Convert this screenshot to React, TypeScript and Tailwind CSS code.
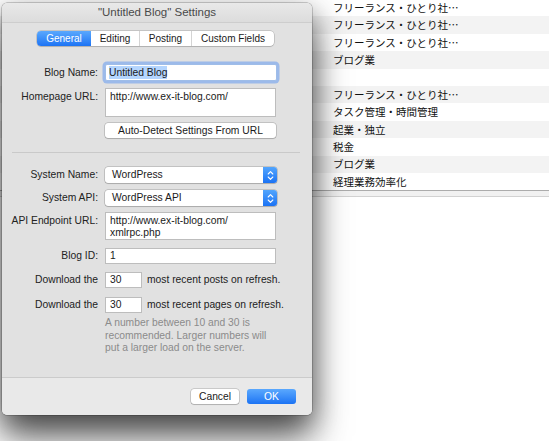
import React from "react";

const rows = [
  "フリーランス・ひとり社…",
  "フリーランス・ひとり社…",
  "フリーランス・ひとり社…",
  "ブログ業",
  "",
  "フリーランス・ひとり社…",
  "タスク管理・時間管理",
  "起業・独立",
  "税金",
  "ブログ業",
  "経理業務効率化",
];

const tabs = ["General", "Editing", "Posting", "Custom Fields"];
const tabWidths = ["w-[54px]", "w-[48px]", "w-[52px]", "w-[83px]"];

function Stepper() {
  return (
    <div className="flex h-full w-[14px] items-center justify-center rounded-r-[3px] bg-gradient-to-b from-[#52a5fd] to-[#1a72f4]">
      <svg width="7" height="11" viewBox="0 0 7 11" fill="none" stroke="white" strokeWidth="1.1" strokeLinecap="round" strokeLinejoin="round">
        <path d="M1.2 4 L3.5 1.7 L5.8 4" />
        <path d="M1.2 7 L3.5 9.3 L5.8 7" />
      </svg>
    </div>
  );
}

function Popup({ value }: { value: string }) {
  return (
    <div className="flex h-[16px] w-[172px] rounded-[3px] bg-white shadow-[0_0_0_0.5px_rgba(0,0,0,0.28),0_1px_1px_rgba(0,0,0,0.12)]">
      <div className="flex-1 pl-[7px] leading-[16px] text-[#1a1a1a]">{value}</div>
      <Stepper />
    </div>
  );
}

function Label({ children, multi }: { children: React.ReactNode; multi?: boolean }) {
  return (
    <div className={`w-[96px] shrink-0 text-right text-[#222] ${multi ? "pt-[3px] leading-[12px]" : ""}`}>
      {children}
    </div>
  );
}

export default function App() {
  return (
    <div className="relative h-[441px] w-[549px] overflow-hidden bg-white font-['Liberation_Sans',Arial,sans-serif]">
      {/* list behind the window */}
      <div className="mt-[-1px] font-['Noto_Sans_CJK_JP',sans-serif] text-[10.5px] text-[#111]">
        {rows.map((r, i) => (
          <div
            key={i}
            className={`flex h-[17.4px] items-center pl-[333px] ${i % 2 === 1 ? "bg-[#f3f3f3]" : "bg-white"}`}
          >
            {r}
          </div>
        ))}
        <div className="h-[7px] border-t border-b border-t-[#acacac] border-b-[#d2d2d2] bg-[#f1f1f1]" />
      </div>

      {/* settings window */}
      <div className="absolute left-[2px] top-[3px] flex h-[412px] w-[310px] flex-col overflow-hidden rounded-[5px] bg-[#e1e1e1] text-[10.3px] shadow-[0_0_0_0.5px_rgba(0,0,0,0.35),0_22px_36px_rgba(0,0,0,0.62),0_8px_26px_rgba(0,0,0,0.3)]">
        <div className="flex h-[20px] shrink-0 items-center justify-center border-b border-[#cdcdcd] bg-gradient-to-b from-[#e9e9e9] to-[#dcdcdc] text-[11.5px] text-[#4a4a4a]">
          "Untitled Blog" Settings
        </div>

        <div className="flex flex-1 flex-col">
          {/* tabs */}
          <div className="mt-[8px] flex justify-center pr-[3px]">
            <div className="flex h-[15px] rounded-[4px] bg-white shadow-[0_0_0_0.5px_rgba(0,0,0,0.25),0_1px_1px_rgba(0,0,0,0.1)]">
              {tabs.map((t, i) => (
                <div
                  key={t}
                  className={`${tabWidths[i]} flex items-center justify-center text-[10px] ${
                    i === 0
                      ? "rounded-l-[4px] bg-gradient-to-b from-[#5aa8fd] to-[#1b73f4] text-white"
                      : "border-l border-[#d4d4d4] text-[#1a1a1a]"
                  } ${i === 1 ? "border-l-0" : ""}`}
                >
                  {t}
                </div>
              ))}
            </div>
          </div>

          {/* Blog Name */}
          <div className="mt-[18px] flex items-center gap-[7px]">
            <Label>Blog Name:</Label>
            <div className="flex h-[17px] w-[172px] items-center rounded-[2px] border border-[#9fbde8] bg-white px-[3px] shadow-[0_0_0_2.5px_rgba(110,160,240,0.6)]">
              <span className="bg-[#b4d5fe] leading-[13px] text-[#1a1a1a]">Untitled Blog</span>
            </div>
          </div>

          {/* Homepage URL */}
          <div className="mt-[7px] flex items-start gap-[7px]">
            <Label multi>Homepage URL:</Label>
            <div className="h-[29px] w-[171px] border border-[#bdbdbd] bg-white px-[4px] pt-[2px] leading-[12px] text-[#1a1a1a]">
              http://www.ex-it-blog.com/
            </div>
          </div>

          {/* Auto detect */}
          <div className="mt-[6px] flex pl-[103px]">
            <div className="flex h-[15px] w-[171px] items-center justify-center rounded-[3px] bg-white text-[#1a1a1a] shadow-[0_0_0_0.5px_rgba(0,0,0,0.28),0_1px_1px_rgba(0,0,0,0.12)]">
              Auto-Detect Settings From URL
            </div>
          </div>

          <div className="ml-[10px] mr-[12px] mt-[14px] h-px bg-[#c9c9c9]" />

          <div className="mt-[14px] flex items-center gap-[7px]">
            <Label>System Name:</Label>
            <Popup value="WordPress" />
          </div>

          <div className="mt-[7px] flex items-center gap-[7px]">
            <Label>System API:</Label>
            <Popup value="WordPress API" />
          </div>

          <div className="mt-[6px] flex items-start gap-[7px]">
            <Label multi>API Endpoint URL:</Label>
            <div className="h-[28px] w-[171px] border border-[#bdbdbd] bg-white px-[4px] pt-[2px] leading-[12px] text-[#1a1a1a]">
              http://www.ex-it-blog.com/
              <br />
              xmlrpc.php
            </div>
          </div>

          <div className="mt-[8px] flex items-center gap-[7px]">
            <Label>Blog ID:</Label>
            <div className="flex h-[16px] w-[171px] items-center border border-[#bdbdbd] bg-white px-[4px] text-[#1a1a1a]">
              1
            </div>
          </div>

          <div className="mt-[8px] flex items-center gap-[7px]">
            <Label>Download the</Label>
            <div className="flex h-[16px] w-[37px] items-center border border-[#bdbdbd] bg-white px-[4px] text-[#1a1a1a]">
              30
            </div>
            <div className="ml-[-2px] text-[#222]">most recent posts on refresh.</div>
          </div>

          <div className="mt-[9px] flex items-center gap-[7px]">
            <Label>Download the</Label>
            <div className="flex h-[16px] w-[37px] items-center border border-[#bdbdbd] bg-white px-[4px] text-[#1a1a1a]">
              30
            </div>
            <div className="ml-[-2px] text-[#222]">most recent pages on refresh.</div>
          </div>

          <div className="mt-[4px] pl-[103px] leading-[12.5px] text-[#8b8b8b]">
            A number between 10 and 30 is
            <br />
            recommended. Larger numbers will
            <br />
            put a larger load on the server.
          </div>
        </div>

        {/* footer */}
        <div className="flex h-[38px] shrink-0 items-center justify-end gap-[8px] border-t border-[#cbcbcb] bg-[#e9e9e9] pr-[16px]">
          <div className="flex h-[15px] w-[48px] items-center justify-center rounded-[3px] bg-white text-[#1a1a1a] shadow-[0_0_0_0.5px_rgba(0,0,0,0.28),0_1px_1px_rgba(0,0,0,0.12)]">
            Cancel
          </div>
          <div className="flex h-[15px] w-[49px] items-center justify-center rounded-[3px] bg-gradient-to-b from-[#5aa8fd] to-[#1b73f4] text-white">
            OK
          </div>
        </div>
      </div>
    </div>
  );
}
